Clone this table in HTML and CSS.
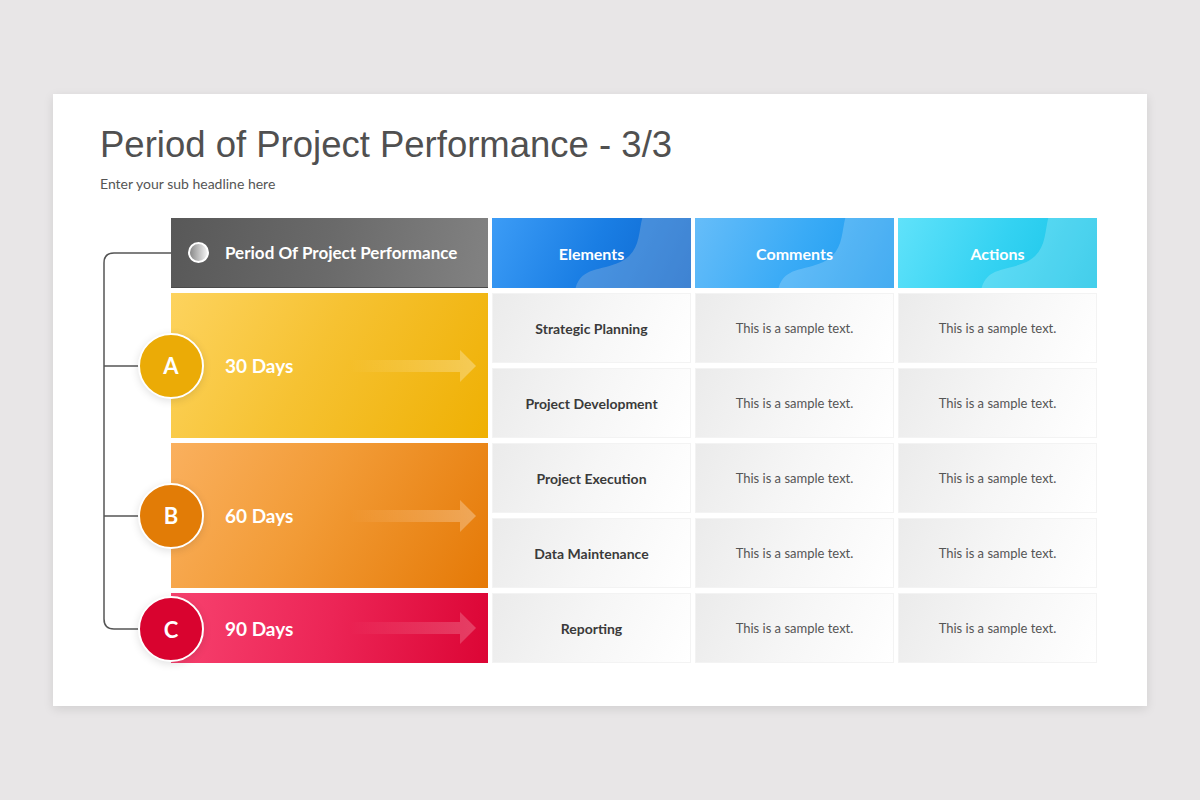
FILE: index.html
```html
<!DOCTYPE html>
<html>
<head>
<meta charset="utf-8">
<link rel="stylesheet" href="styles.css">
</head>
<body>
<div class="slide">
  <h1 class="title">Period of Project Performance - 3/3</h1>
  <p class="subtitle">Enter your sub headline here</p>
  <div class="diagram">
    <svg class="bracket" width="68" height="445" viewBox="0 0 68 445">
      <path d="M68,35 H11 Q1,35 1,45 V401 Q1,411 11,411 H38" fill="none" stroke="#555" stroke-width="1.5"/>
      <path d="M1,148 H38 M1,298 H38" fill="none" stroke="#555" stroke-width="1.5"/>
    </svg>
    <div class="table">
      <div class="head-main"><span class="dot"></span><span>Period Of Project Performance</span></div>
      <div class="head head-el"><svg class="wave" viewBox="0 0 200 70" preserveAspectRatio="none"><path d="M151,0 C147,16 149,34 129,44 C109,53 90,49 84,70 L200,70 L200,0 Z"/></svg><span>Elements</span></div>
      <div class="head head-co"><svg class="wave" viewBox="0 0 200 70" preserveAspectRatio="none"><path d="M151,0 C147,16 149,34 129,44 C109,53 90,49 84,70 L200,70 L200,0 Z"/></svg><span>Comments</span></div>
      <div class="head head-ac"><svg class="wave" viewBox="0 0 200 70" preserveAspectRatio="none"><path d="M151,0 C147,16 149,34 129,44 C109,53 90,49 84,70 L200,70 L200,0 Z"/></svg><span>Actions</span></div>

      <div class="band band-a">
        <span class="badge badge-a">A</span>
        <span class="band-label">30 Days</span>
        <svg class="arrow" width="126" height="32" viewBox="0 0 126 32"><defs><linearGradient id="ga" x1="0" x2="1" y1="0" y2="0"><stop offset="0" stop-color="#fff" stop-opacity="0"/><stop offset="1" stop-color="#fff" stop-opacity="0.3"/></linearGradient></defs><path d="M0,10 H110 V0 L126,16 L110,32 V22 H0 Z" fill="url(#ga)"/></svg>
      </div>
      <div class="cell cell-el">Strategic Planning</div>
      <div class="cell">This is a sample text.</div>
      <div class="cell">This is a sample text.</div>
      <div class="cell cell-el">Project Development</div>
      <div class="cell">This is a sample text.</div>
      <div class="cell">This is a sample text.</div>

      <div class="band band-b">
        <span class="badge badge-b">B</span>
        <span class="band-label">60 Days</span>
        <svg class="arrow" width="126" height="32" viewBox="0 0 126 32"><defs><linearGradient id="gb" x1="0" x2="1" y1="0" y2="0"><stop offset="0" stop-color="#fff" stop-opacity="0"/><stop offset="1" stop-color="#fff" stop-opacity="0.3"/></linearGradient></defs><path d="M0,10 H110 V0 L126,16 L110,32 V22 H0 Z" fill="url(#gb)"/></svg>
      </div>
      <div class="cell cell-el">Project Execution</div>
      <div class="cell">This is a sample text.</div>
      <div class="cell">This is a sample text.</div>
      <div class="cell cell-el">Data Maintenance</div>
      <div class="cell">This is a sample text.</div>
      <div class="cell">This is a sample text.</div>

      <div class="band band-c">
        <span class="badge badge-c">C</span>
        <span class="band-label">90 Days</span>
        <svg class="arrow" width="126" height="32" viewBox="0 0 126 32"><defs><linearGradient id="gc" x1="0" x2="1" y1="0" y2="0"><stop offset="0" stop-color="#fff" stop-opacity="0"/><stop offset="1" stop-color="#fff" stop-opacity="0.22"/></linearGradient></defs><path d="M0,10 H110 V0 L126,16 L110,32 V22 H0 Z" fill="url(#gc)"/></svg>
      </div>
      <div class="cell cell-el">Reporting</div>
      <div class="cell">This is a sample text.</div>
      <div class="cell">This is a sample text.</div>
    </div>
  </div>
</div>
</body>
</html>
```
FILE: styles.css
```css
* { box-sizing: border-box; }
html, body { margin: 0; padding: 0; }
body {
  background: #e8e6e7;
  padding: 94px 53px;
  font-family: Lato, "Open Sans", sans-serif;
}
.slide {
  width: 1094px;
  height: 612px;
  background: #fff;
  box-shadow: 0 3px 10px rgba(0,0,0,0.10);
  padding: 29px 47px 0 47px;
}
.title {
  margin: 0;
  font-family: "Liberation Sans", Arial, sans-serif;
  font-weight: 400;
  font-size: 36.5px;
  line-height: 44px;
  color: #505050;
}
.subtitle {
  margin: 8px 0 0 0;
  font-size: 14px;
  line-height: 18px;
  color: #555;
}
.diagram {
  position: relative;
  margin-top: 25px;
  margin-left: 71px;
}
.bracket {
  position: absolute;
  left: -68px;
  top: 0;
}
.table {
  display: grid;
  grid-template-columns: 317px 199px 199px 199px;
  grid-auto-rows: 70px;
  column-gap: 4px;
  row-gap: 5px;
}
.head-main {
  display: flex;
  align-items: center;
  gap: 16px;
  padding-left: 17px;
  background: linear-gradient(100deg, #585858 0%, #6a6a6a 50%, #828282 100%);
  color: #fff;
  font-weight: 700;
  font-size: 17px;
  border-bottom: 1px solid #4a4a4a;
}
.dot {
  width: 21px;
  height: 21px;
  border-radius: 50%;
  border: 2px solid #fff;
  background: linear-gradient(90deg, #8a8a8a 0%, #c8c8c8 60%, #f2f2f2 100%);
  flex: none;
}
.head {
  position: relative;
  display: flex;
  align-items: center;
  justify-content: center;
  color: #fff;
  font-weight: 700;
  font-size: 16px;
  overflow: hidden;
}
.head span { position: relative; }
.wave {
  position: absolute;
  left: 0; top: 0;
  width: 100%;
  height: 100%;
}
.wave path { fill: rgba(255,255,255,0.2); }
.head-el { background: linear-gradient(115deg, #3c9cf6 0%, #1a7ee4 50%, #0b64cc 100%); }
.head-co { background: linear-gradient(115deg, #66bdf9 0%, #3aabf6 50%, #1698ee 100%); }
.head-ac { background: linear-gradient(115deg, #60e2fa 0%, #34d2f2 50%, #14c2e6 100%); }
.head-el .wave path { fill: rgba(160,190,220,0.35); }

.band {
  grid-row: span 2;
  position: relative;
  display: flex;
  align-items: center;
  padding-left: 54px;
  padding-right: 12px;
  color: #fff;
}
.band-c { grid-row: span 1; }
.band-a { background: linear-gradient(120deg, #fdd35e 0%, #f6c232 45%, #efb003 100%); }
.band-b { background: linear-gradient(120deg, #fab05e 0%, #f29b36 45%, #e57906 100%); }
.band-c { background: linear-gradient(100deg, #f7426f 0%, #ec2556 50%, #dc0535 100%); }
.band-label {
  font-weight: 700;
  font-size: 19px;
  flex: 1;
}
.arrow { flex: none; }
.badge {
  position: absolute;
  left: -33px;
  top: 50%;
  transform: translateY(-50%);
  width: 66px;
  height: 66px;
  border-radius: 50%;
  border: 2.5px solid #fff;
  display: flex;
  align-items: center;
  justify-content: center;
  font-weight: 700;
  font-size: 22px;
  color: #fff;
  box-shadow: 0 2px 8px rgba(0,0,0,0.12);
}
.badge-a { background: #ebab06; }
.badge-b { background: #e27c06; }
.badge-c { background: #d9032f; }
.band-c .badge { top: calc(50% + 1px); }

.cell {
  display: flex;
  align-items: center;
  justify-content: center;
  background: linear-gradient(115deg, #ebebeb 0%, #f6f6f6 50%, #ffffff 100%);
  border: 1px solid #f3f3f3;
  font-size: 13px;
  color: #555;
}
.cell-el {
  font-weight: 700;
  font-size: 14px;
  color: #3a3a3a;
}
```
